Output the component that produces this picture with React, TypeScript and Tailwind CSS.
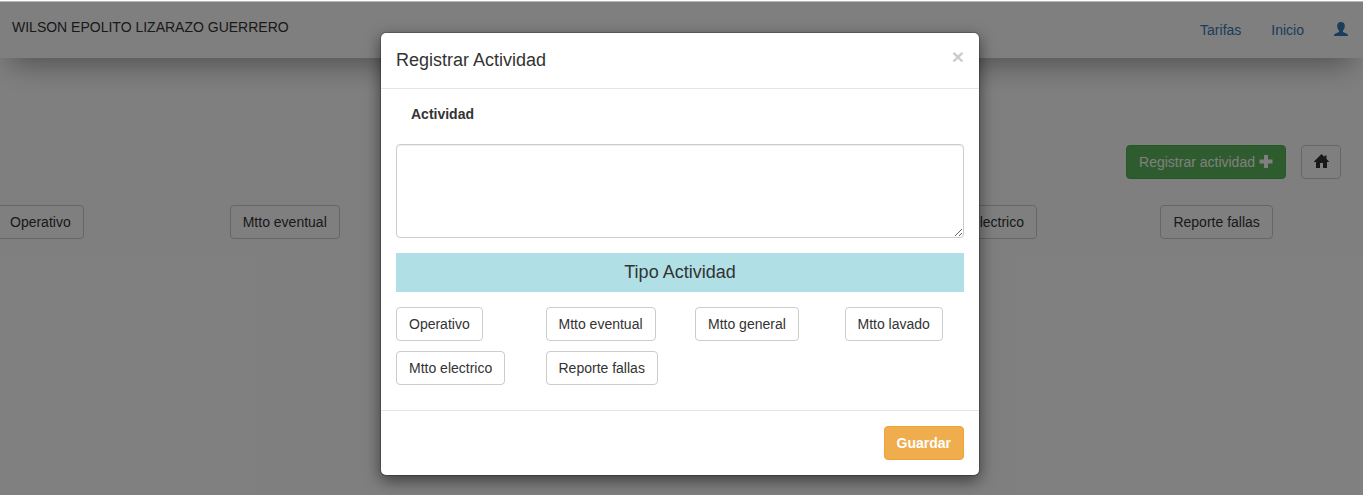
import type { ReactNode } from "react";

const tipos = [
  "Operativo",
  "Mtto eventual",
  "Mtto general",
  "Mtto lavado",
  "Mtto electrico",
  "Reporte fallas",
];

function Boton({ children, className = "" }: { children: ReactNode; className?: string }) {
  return (
    <button
      type="button"
      className={`h-[34px] shrink-0 rounded border border-[#ccc] bg-white px-3 text-sm leading-5 whitespace-nowrap text-[#333] ${className}`}
    >
      {children}
    </button>
  );
}

function IconoUsuario() {
  return (
    <svg width="14" height="14" viewBox="0 0 14 14" fill="currentColor" aria-hidden="true">
      <path d="M7 0C4.400 0 3.200 1.500 3.200 3.800c0 2 .7 3.800 1.900 4.800v1.200c-.5.700-1.800 1-3.100 1.500C.6 11.800 0 12.300 0 14h14c0-1.700-.6-2.200-2-2.700-1.300-.5-2.600-.8-3.100-1.500V8.600c1.200-1 1.900-2.800 1.900-4.800C10.800 1.500 9.600 0 7 0Z" />
    </svg>
  );
}

function IconoMas() {
  return (
    <svg width="14" height="14" viewBox="0 0 14 14" fill="currentColor" aria-hidden="true">
      <path d="M5 0h4v4.500h4.500v4H9V13H5V8.500H.5v-4H5Z" />
    </svg>
  );
}

function IconoCasa() {
  return (
    <svg className="mb-0.5" width="15" height="14" viewBox="0 0 15 14" fill="currentColor" aria-hidden="true">
      <path d="M7.500 0 10.500 3V1.500h2V5L15 7.500V8h-2v6H9V9H6v5H2V8H0v-.5Z" />
    </svg>
  );
}

function Pagina() {
  return (
    <div className="h-[493px] overflow-hidden bg-white">
      <header className="flex h-14 justify-between bg-white shadow-[0_16px_30px_-10px_rgba(0,0,0,0.38)]">
        <span className="pt-[15px] pl-3 text-sm leading-5">WILSON EPOLITO LIZARAZO GUERRERO</span>
        <nav className="flex items-start gap-[30px] pt-[18px] pr-[15px] text-sm leading-5 text-[#337ab7]">
          <a>Tarifas</a>
          <a>Inicio</a>
          <a className="pt-0.5">
            <IconoUsuario />
          </a>
        </nav>
      </header>
      <div className="mt-[87px] flex justify-end gap-[15px] pr-[22px]">
        <button
          type="button"
          className="flex h-[34px] w-40 items-center justify-center gap-1 rounded border border-[#4cae4c] bg-[#5cb85c] text-sm leading-5 whitespace-nowrap text-white"
        >
          Registrar actividad
          <IconoMas />
        </button>
        <Boton className="w-10">
          <IconoCasa />
        </Boton>
      </div>
      <div className="mt-[26px] -ml-[3px] grid grid-cols-[repeat(6,232.700px)]">
        {tipos.map((tipo) => (
          <div key={tipo}>
            <Boton>{tipo}</Boton>
          </div>
        ))}
      </div>
    </div>
  );
}

function Modal() {
  return (
    <section
      role="dialog"
      className="mt-[30px] ml-[380px] h-[444px] w-[600px] rounded-md border border-black/20 bg-white bg-clip-padding shadow-[0_5px_15px_rgba(0,0,0,0.5)]"
    >
      <div className="flex h-14 items-start justify-between border-b border-[#e5e5e5] px-[15px] pt-[14px]">
        <h4 className="text-lg leading-[26px]">Registrar Actividad</h4>
        <button type="button" className="-mt-px text-[21px] leading-[21px] font-bold text-black opacity-20">
          ×
        </button>
      </div>
      <div className="h-[321px] px-[15px] pt-[15px]">
        <label className="block pl-[15px] text-sm leading-5 font-bold">Actividad</label>
        <textarea className="mt-5 block h-[94px] w-full resize-y rounded border border-[#ccc] bg-white shadow-[inset_0_1px_1px_rgba(0,0,0,0.075)]" />
        <h4 className="mt-[15px] h-[39px] bg-[#b0e0e6] text-center text-lg leading-[38px]">Tipo Actividad</h4>
        <div className="mt-[15px] grid grid-cols-[repeat(4,149.500px)] gap-y-2.5">
          {tipos.map((tipo) => (
            <div key={tipo}>
              <Boton>{tipo}</Boton>
            </div>
          ))}
        </div>
      </div>
      <div className="flex justify-end border-t border-[#e5e5e5] p-[15px]">
        <button
          type="button"
          className="h-[34px] rounded border border-[#eea236] bg-[#f0ad4e] px-3 text-sm leading-5 font-bold text-white"
        >
          Guardar
        </button>
      </div>
    </section>
  );
}

export default function App() {
  return (
    <main className="h-[495px] overflow-hidden bg-white font-['Liberation_Sans',Arial,sans-serif] text-[#333]">
      <div className="h-0.5 border-b border-[#b5b9b8]" />
      <Pagina />
      <div className="absolute inset-x-0 top-0.5 h-[493px] overflow-hidden bg-black/50">
        <Modal />
      </div>
    </main>
  );
}
